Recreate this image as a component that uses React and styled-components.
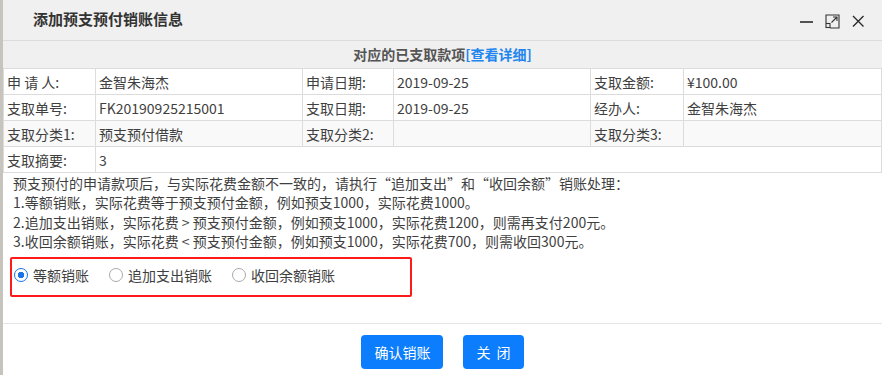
import styled, { createGlobalStyle } from 'styled-components'
import { useState } from 'react'

const Global = createGlobalStyle`
  html, body {
    margin: 0;
    padding: 0;
    background: #c7c4be;
  }
  body {
    font-family: "Noto Sans CJK SC", "Noto Sans", sans-serif;
    color: #444;
  }
`

const rows = [
  [['申 请 人:', '金智朱海杰'], ['申请日期:', '2019-09-25'], ['支取金额:', '¥100.00']],
  [['支取单号:', 'FK20190925215001'], ['支取日期:', '2019-09-25'], ['经办人:', '金智朱海杰']],
  [['支取分类1:', '预支预付借款'], ['支取分类2:', ''], ['支取分类3:', '']],
]

const options = ['等额销账', '追加支出销账', '收回余额销账']

export default function App() {
  const [mode, setmode] = useState(0)

  return (
    <Page>
      <Global />
      <Dialog>
        <TitleBar>
          <Title>添加预支预付销账信息</Title>
          <Tools>
            <svg width="15" height="15" viewBox="0 0 15 15">
              <path d="M1 8H14" stroke="#2b2b2b" strokeWidth="1.6" />
            </svg>
            <svg width="15" height="15" viewBox="0 0 15 15" fill="none" stroke="#333" strokeWidth="1.1">
              <path d="M1 9V1H14V14H5" />
              <rect x="1" y="9.5" width="4" height="4" />
              <path d="M6.5 8.5L12 3M8 3H12V7" />
            </svg>
            <svg width="14" height="14" viewBox="0 0 14 14" stroke="#2b2b2b" strokeWidth="1.4">
              <path d="M2 2L12.5 12.5M12.5 2L2 12.5" />
            </svg>
          </Tools>
        </TitleBar>

        <SectionHead>
          对应的已支取款项<DetailLink>[查看详细]</DetailLink>
        </SectionHead>

        <InfoTable>
          <colgroup>
            <col style={{ width: 92 }} />
            <col style={{ width: 207 }} />
            <col style={{ width: 91 }} />
            <col style={{ width: 197 }} />
            <col style={{ width: 93 }} />
            <col />
          </colgroup>
          <tbody>
            {rows.map((row, i) => (
              <Row key={i} $shade={i === 2}>
                {row.map(([label, value]) => [
                  <Cell key={label + 'l'}>{label}</Cell>,
                  <Cell key={label + 'v'}>{value}</Cell>,
                ])}
              </Row>
            ))}
            <Row>
              <Cell>支取摘要:</Cell>
              <Cell colSpan={5}>3</Cell>
            </Row>
          </tbody>
        </InfoTable>

        <Notes>
          <p>预支预付的申请款项后，与实际花费金额不一致的，请执行“追加支出”和“收回余额”销账处理：</p>
          <p>1.等额销账，实际花费等于预支预付金额，例如预支1000，实际花费1000。</p>
          <p>2.追加支出销账，实际花费 &gt; 预支预付金额，例如预支1000，实际花费1200，则需再支付200元。</p>
          <p>3.收回余额销账，实际花费 &lt; 预支预付金额，例如预支1000，实际花费700，则需收回300元。</p>
        </Notes>

        <ChoiceBox>
          {options.map((o, i) => (
            <Choice key={o} onClick={() => setmode(i)}>
              <Radio $on={mode === i} />
              {o}
            </Choice>
          ))}
        </ChoiceBox>

        <Footer>
          <Button>确认销账</Button>
          <Button>关 闭</Button>
        </Footer>
      </Dialog>
    </Page>
  )
}

const Page = styled.div`
  display: flex;
  width: 882px;
  height: 375px;
  overflow: hidden;
  padding-left: 3px;
  box-sizing: border-box;
`

const Dialog = styled.div`
  flex: 1;
  display: flex;
  flex-direction: column;
  background: #fff;
`

const TitleBar = styled.div`
  display: flex;
  align-items: center;
  justify-content: space-between;
  height: 41px;
  box-sizing: border-box;
  padding: 0 17px 0 30px;
  background: #f0f0f0;
  border-bottom: 1px solid #dcdcdc;
`

const Title = styled.div`
  font-size: 15px;
  font-weight: bold;
  color: #333;
  margin-top: -4px;
`

const Tools = styled.div`
  display: flex;
  align-items: center;
  gap: 11px;
  margin-top: 2px;
`

const SectionHead = styled.div`
  height: 27px;
  line-height: 26px;
  text-align: center;
  background: #f0f0f0;
  font-size: 14px;
  font-weight: bold;
  color: #555;
`

const DetailLink = styled.span`
  color: #2386ee;
  cursor: pointer;
`

const InfoTable = styled.table`
  width: 879px;
  border-collapse: collapse;
  table-layout: fixed;
  font-size: 14px;
`

const Row = styled.tr`
  height: 26px;
  background: ${p => (p.$shade ? '#f9f9f9' : '#fff')};
`

const Cell = styled.td`
  border: 1px solid #dcdcdc;
  padding: 0 0 0 3px;
  line-height: 24px;
  color: #3f3f3f;
  white-space: nowrap;
  overflow: hidden;
`

const Notes = styled.div`
  padding: 1px 0 0 10px;
  font-size: 14px;
  color: #3f3f3f;
  p {
    margin: 0;
    line-height: 19.3px;
  }
`

const ChoiceBox = styled.div`
  display: flex;
  align-items: center;
  width: 402px;
  height: 40px;
  box-sizing: border-box;
  margin: 6px 0 0 7px;
  padding: 0 0 4px 2px;
  border: 2px solid #ff1a1a;
  border-radius: 2px;
`

const Choice = styled.label`
  display: flex;
  align-items: center;
  gap: 5px;
  margin-right: 20px;
  font-size: 14px;
  color: #3f3f3f;
  cursor: pointer;
`

const Radio = styled.span`
  width: 14px;
  height: 14px;
  box-sizing: border-box;
  border-radius: 50%;
  border: 1px solid ${p => (p.$on ? '#1a73e8' : '#aaa')};
  background: ${p => (p.$on ? 'radial-gradient(circle, #1a73e8 0 3px, #fff 3.5px)' : '#fff')};
`

const Footer = styled.div`
  display: flex;
  justify-content: center;
  gap: 20px;
  margin-top: 26px;
  padding-top: 11px;
  border-top: 1px solid #e6e6e6;
`

const Button = styled.button`
  height: 34px;
  padding: 0 13px;
  border: none;
  border-radius: 4px;
  background: #0b7dfd;
  color: #fff;
  font-family: "Noto Sans CJK SC", sans-serif;
  font-size: 14px;
  word-spacing: 3px;
  cursor: pointer;
`
